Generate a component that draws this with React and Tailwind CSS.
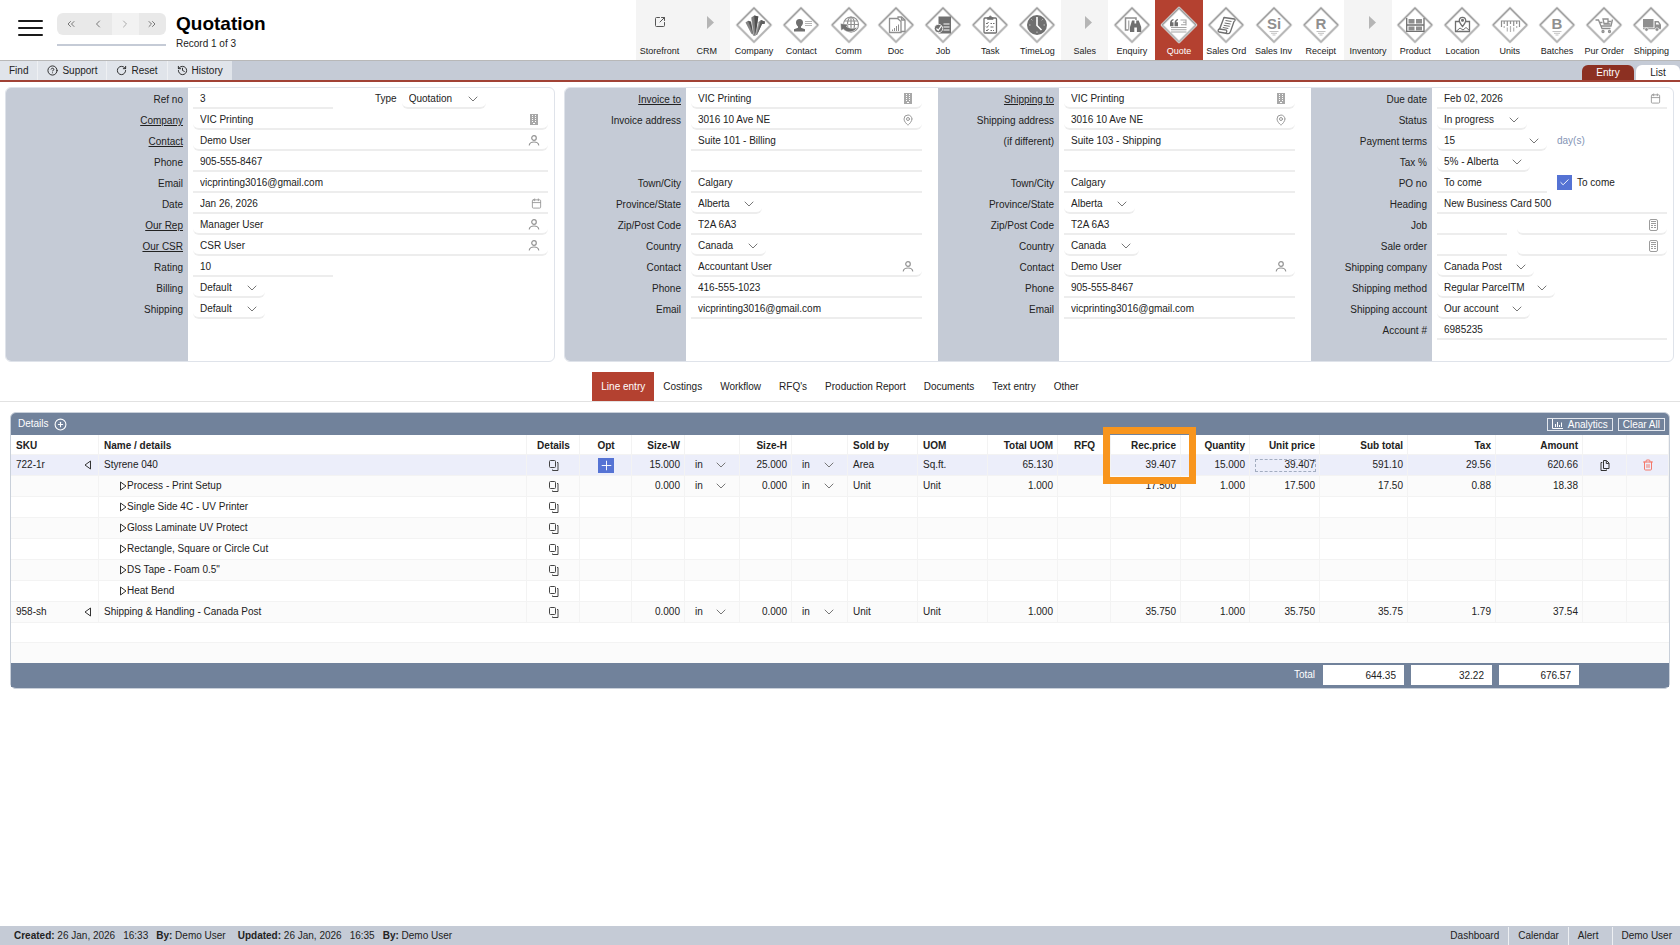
import React from 'react';
import {
    ChevronLeft, ChevronRight, ChevronsLeft, ChevronsRight, ChevronDown, CircleHelp, RotateCw, History,
    SquareArrowOutUpRight, CirclePlus, Plus, Check, Calendar, MapPin, Trash2,
} from 'lucide-react';

const DARK = '#6f6f6f';
const MID = '#8f8f8f';

// Glyphs drawn inside the 36x36 module diamonds
const GLYPHS = {
    company: (
        <g>
            <path d="M9.500 15.500l2.500-1.800 3 1 2.500 13.300-2.300-1.500z" fill="#858585" />
            <path d="M12 13.700l3 1 2.500 13.300z" fill="#555" />
            <path d="M22.500 15l2.500-2 4 1.500-.5 2.500h-2.500L21 28h-2z" fill="#858585" />
            <path d="M25 13l4 1.500-.5 2.500h-2.500L21 28z" fill="#5f5f5f" />
            <path d="M15.300 10.500l3-2 4 1-.8 5.500-2 13.700h-2.300z" fill="#7d7d7d" />
            <path d="M18.300 8.500l4 1-.8 5.500-2 13.700z" fill="#4f4f4f" />
            <path d="M15.600 14l2 13.500M22.500 16l-3 12" stroke="#fff" strokeWidth=".4" fill="none" />
        </g>
    ),
    contact: (
        <g fill={DARK}>
            <path d="M16.500 12c2.200 0 3.500 1.500 3.500 3.500 0 1.700-.9 3.300-2 4v1.300l4 1.400V24.500H11v-2.300l4-1.400v-1.300c-1.100-.7-2-2.300-2-4 0-2 1.300-3.500 3.500-3.500z" />
            <path d="M22 14.500h7M22 16.500h7M22 18.500h7" stroke="#b5b5b5" strokeWidth="1" />
        </g>
    ),
    comm: (
        <g fill="none" stroke={MID} strokeWidth="1.200">
            <circle cx="20" cy="17.500" r="7.500" />
            <ellipse cx="20" cy="17.500" rx="3.500" ry="7.500" />
            <path d="M12.500 17.500h15M13.500 14h13M20 10v15" />
            <path d="M9.500 16.500l7.500 1-1.500 2c2.500 2 7.500 2.500 11 .5-2.500 5.500-10.500 6.500-14 2.300l-2.500 1.200z" fill={DARK} stroke="#fff" strokeWidth=".5" />
        </g>
    ),
    doc: (
        <g fill="none" stroke={MID} strokeWidth="1.300">
            <path d="M20 11.500V10h3.500l3.500 3v11.500h-4" fill="#fff" />
            <path d="M23.500 10v3H27" />
            <path d="M11.500 11.500h8l3.500 3V25.500H11.500z" fill="#fff" />
            <path d="M14.500 24v-1.500M16.500 24v-3M18.500 24v-5M20.500 24v-6.500" strokeWidth="1" />
        </g>
    ),
    job: (
        <g>
            <path d="M13.500 9.500H26V26.500H13.500z" fill={DARK} />
            <path d="M18.500 17h6M18.500 20h6M18.500 23h6" stroke="#fff" strokeWidth="1.200" />
            <circle cx="13.500" cy="21.500" r="4.200" fill={DARK} stroke="#fff" strokeWidth=".8" />
            <path d="M11.500 21.500l1.700 1.800 3.200-4.500" stroke="#fff" strokeWidth="1.200" fill="none" />
        </g>
    ),
    task: (
        <g fill="none" stroke={DARK} strokeWidth="1.300">
            <rect x="12" y="11" width="12.500" height="15" rx="1" />
            <path d="M15.500 12.500v-2h1.500a1.300 1.600 0 012.600 0h1.500v2z" fill={DARK} strokeWidth=".6" />
            <path d="M14 16l1 1 1.500-2M14 19.500l1 1 1.500-2M14 23l1 1 1.500-2M18.500 16.500h1.500M21 16.500h1.500M18.500 20h3M18.500 23.500h1.500M21 23.500h1" strokeWidth="1" />
        </g>
    ),
    timelog: (
        <g>
            <circle cx="18" cy="18" r="10" fill={DARK} />
            <path d="M18 10v8.500l4.500 4.500" stroke="#fff" strokeWidth="1.600" fill="none" />
            <path d="M10 18h1.500M24.500 18H26M18 24.500V26M12.300 12.300l1 1M23.700 12.300l-1 1" stroke="#ddd" strokeWidth=".8" />
        </g>
    ),
    enquiry: (
        <g>
            <path d="M14 23h-2.500V11H22v2" fill="none" stroke={MID} strokeWidth="1.500" />
            <path d="M14.800 13.500v10" stroke={MID} strokeWidth="1" />
            <path d="M18 13.500h2.500v3h1.700v-3h2.500l2.500 6.500v5h-4.300v-4.500h-2.600V25H16v-5z" fill={DARK} />
        </g>
    ),
    quote: (
        <g>
            <path d="M9 16.500c0-2.600 1-4.100 3.500-4.500v1.200c-1 .3-1.600 1-1.600 2h1.600v4H9zM13.500 16.500c0-2.600 1-4.100 3.500-4.500v1.200c-1 .3-1.600 1-1.600 2H17v4h-3.500z" fill={DARK} />
            <path d="M19.500 13h6M22 15.300h3.500M20 17.700h5.500M10 20.500h15.500M10 22.700h15.500M10 25h15.500M25 12.500v6" stroke="#a5a5a5" strokeWidth="1.100" />
        </g>
    ),
    salesord: (
        <g fill="none" stroke={DARK} strokeWidth="1.300" strokeLinejoin="round">
            <path d="M16 10.500l10.500 1.500c1 .5.8 2-.5 2.500l-3.500 10c-.5 1.500-2 2.500-3.500 2l-8-1.500c-1.500-.8-1-2.800.5-3zM16 10.500l-4.300 11.500" />
            <path d="M11.500 22l7 1.200c.5 1 .3 2.500-.8 3" />
            <path d="M17.500 13.500l6 1M16.600 16l6 1M15.700 18.300l6 1M14.800 20.500l5.500 1" strokeWidth="1" />
        </g>
    ),
    product: (
        <g fill={MID}>
            <path d="M9.700 11v14M27 11v14M9.500 18h17.500M9.500 24.300h17.500" stroke={DARK} strokeWidth="1.300" />
            <rect x="11.500" y="12" width="6" height="4.500" />
            <rect x="19" y="12" width="6" height="4.500" />
            <rect x="11.500" y="19.500" width="6" height="4" />
            <rect x="19" y="19.500" width="6" height="4" />
        </g>
    ),
    location: (
        <g fill="none" stroke={DARK} strokeWidth="1.300">
            <path d="M15 14.500h-3.500v10h14v-10H22" />
            <path d="M18.500 19.500c-2-2.500-3.200-4-3.200-6a3.200 3.200 0 016.400 0c0 2-1.200 3.500-3.200 6z" />
            <circle cx="18.500" cy="13.300" r=".9" fill={DARK} />
            <path d="M12 24.500l4-3.500 3 2 3-2.500 3.500 3" strokeWidth="1" />
        </g>
    ),
    units: (
        <g fill="none" stroke={MID} strokeWidth="1.200">
            <path d="M9.500 20v-6h18v6" />
            <path d="M12.200 14v3M15.300 14v5M18.500 14v3M21.700 14v5M24.700 14v3" />
            <path d="M12.200 19v2M15.300 20.500v4M18.500 19v6M21.700 20.500v4M24.700 19v2" stroke="#b5b5b5" />
        </g>
    ),
    cart: (
        <g fill="none" stroke={MID} strokeWidth="1.300">
            <path d="M9.500 13h3l3.500 8.500h8.500M13.500 15.500h3M15 19h10l1.500-6.500" />
            <path d="M17 12h5v4.500h-4zM22 14.500h3.500M17.500 17h7" />
            <circle cx="17" cy="24.500" r="1" />
            <circle cx="23.500" cy="24.500" r="1" />
        </g>
    ),
    truck: (
        <g fill={MID}>
            <path d="M10 12h10.500v8.500H10z" />
            <path d="M21.500 14h4l2.500 3.500v4h-6.500z" />
            <path d="M23 15.500h2l1.300 2H23z" fill="#fff" />
            <path d="M10 21.700h18" stroke={MID} strokeWidth="1" />
            <circle cx="13.500" cy="22.500" r="1.800" stroke="#fff" strokeWidth=".6" />
            <circle cx="24" cy="22.500" r="1.800" stroke="#fff" strokeWidth=".6" />
        </g>
    ),
};

const MODULES = [
    { name: 'Storefront', kind: 'link' },
    { name: 'CRM', kind: 'group' },
    { name: 'Company', glyph: 'company' },
    { name: 'Contact', glyph: 'contact' },
    { name: 'Comm', glyph: 'comm' },
    { name: 'Doc', glyph: 'doc' },
    { name: 'Job', glyph: 'job' },
    { name: 'Task', glyph: 'task' },
    { name: 'TimeLog', glyph: 'timelog' },
    { name: 'Sales', kind: 'group' },
    { name: 'Enquiry', glyph: 'enquiry' },
    { name: 'Quote', glyph: 'quote', active: true },
    { name: 'Sales Ord', glyph: 'salesord' },
    { name: 'Sales Inv', letters: 'Si' },
    { name: 'Receipt', letters: 'R' },
    { name: 'Inventory', kind: 'group' },
    { name: 'Product', glyph: 'product' },
    { name: 'Location', glyph: 'location' },
    { name: 'Units', glyph: 'units' },
    { name: 'Batches', letters: 'B' },
    { name: 'Pur Order', glyph: 'cart' },
    { name: 'Shipping', glyph: 'truck' },
];

function Diamond({ glyph, letters }) {
    return (
        <svg width="38" height="38" viewBox="-1 -1 38 38" aria-hidden="true">
            <path d="M18 1L35 18 18 35 1 18z" fill="#fff" stroke="#dcdcdc" strokeWidth="2.600" strokeLinejoin="round" />
            <path d="M1 18L18 35 35 18" fill="none" stroke="#b4b4b4" strokeWidth="1.600" strokeLinejoin="round" />
            <path d="M1 18L18 1 35 18" fill="none" stroke="#9d9d9d" strokeWidth="1.300" strokeLinejoin="round" />
            {letters ? (
                <>
                    <text x="18" y="22" textAnchor="middle" fontSize="15" fontWeight="700" fill={MID}>{letters}</text>
                    <path d="M13.500 24.500h9M15 26.300h6M16.500 28h3" stroke="#c4c4c4" strokeWidth="1" />
                </>
            ) : GLYPHS[glyph]}
        </svg>
    );
}

function ModuleButton({ mod }) {
    return (
        <button className={`flex flex-col items-center h-full text-[9px] leading-[12px] whitespace-nowrap ${mod.active ? 'bg-[#b44130] text-white' : mod.kind ? 'bg-[#f4f4f4] text-[#222]' : 'text-[#222]'}`}>
            <span className="flex items-center justify-center h-[45px] pt-[5px]">
                {mod.kind === 'link' && <SquareArrowOutUpRight size={12} className="mb-1.5 text-[#555]" />}
                {mod.kind === 'group' && (
                    <svg width="7" height="13" viewBox="0 0 7 13" className="mb-1.5 ml-2" aria-hidden="true">
                        <path d="M0 0l7 6.500L0 13z" fill="#b5b5b5" />
                    </svg>
                )}
                {!mod.kind && <Diamond glyph={mod.glyph} letters={mod.letters} />}
            </span>
            <span>{mod.name}</span>
        </button>
    );
}

function BuildingIcon() {
    return (
        <svg width="8" height="11" viewBox="0 0 8 11" aria-hidden="true">
            <path d="M0 0h8v11H0z" fill="#a8a8a8" />
            <path d="M2 1.500h1M5 1.500h1M2 3.500h1M5 3.500h1M2 5.500h1M5 5.500h1M2 7.500h1M5 7.500h1M3 9.500h2" stroke="#fff" />
        </svg>
    );
}

function SheetIcon() {
    return (
        <svg width="9" height="12" viewBox="0 0 9 12" fill="none" stroke="#9c9c9c" aria-hidden="true">
            <rect x=".5" y=".5" width="8" height="11" rx="1.500" />
            <path d="M2 2.500h5M2 4.500h5M2 6.500h2M5 6.500h2M2 8.500h2M5 8.500h2" />
        </svg>
    );
}

function PersonIcon() {
    return (
        <svg width="12" height="11" viewBox="0 0 12 11" fill="none" stroke="#949494" strokeWidth="1.200" strokeLinecap="round" aria-hidden="true">
            <circle cx="6" cy="3" r="2.300" />
            <path d="M1.300 10c.3-2 2-3 4.700-3s4.400 1 4.700 3" />
        </svg>
    );
}

function DetailsIcon() {
    return (
        <svg width="11" height="11" viewBox="0 0 11 11" fill="none" stroke="#444" strokeLinejoin="round" aria-hidden="true">
            <rect x="1.500" y=".5" width="6" height="7" rx="1" />
            <path d="M9 2.500h1v8H4.500V9.500" />
        </svg>
    );
}

function DuplicateIcon() {
    return (
        <svg width="10" height="11" viewBox="0 0 10 11" fill="none" stroke="#333" strokeLinejoin="round" aria-hidden="true">
            <path d="M3.500.5h3L9 3v5.500H3.500z" />
            <path d="M6.300 1v2.500h2.500M2.300 2.500H1v8h5.500V9.500" />
        </svg>
    );
}

const FIELD_ICONS = {
    building: <BuildingIcon />,
    sheet: <SheetIcon />,
    person: <PersonIcon />,
    calendar: <Calendar size={11} />,
    pin: <MapPin size={12} />,
};

function TextField({ id, value = '', icon, width = 'w-full', label }) {
    const isDate = icon === 'calendar';
    return (
        <span className={`relative block ${width}`}>
            <input id={id} aria-label={label} defaultValue={value} className={`block w-full h-[21px] pt-0.5 pl-[7px] pr-6 border-b-2 border-[#ededed] bg-transparent outline-none ${icon && !isDate ? 'rounded-b-md' : ''}`} />
            {icon && <span className={`absolute inset-y-0 flex items-center justify-center w-3 pointer-events-none text-[#999] ${isDate ? 'right-1.5' : 'right-2'}`}>{FIELD_ICONS[icon]}</span>}
        </span>
    );
}

function SelectField({ id, value, width }) {
    return (
        <span className={`relative block ${width}`}>
            <select id={id} defaultValue={value} className="block w-full h-[21px] pt-0.5 pl-[7px] appearance-none rounded-b-md border-b-2 border-[#ededed] bg-transparent outline-none">
                <option>{value}</option>
            </select>
            <ChevronDown size={16} strokeWidth={1.500} className="absolute top-[3px] right-[5px] pointer-events-none text-[#777]" />
        </span>
    );
}

const CUSTOMER = [
    { label: 'Ref no', value: '3', width: 'w-[140px]', type: true },
    { label: 'Company', value: 'VIC Printing', icon: 'building', link: true },
    { label: 'Contact', value: 'Demo User', icon: 'person', link: true },
    { label: 'Phone', value: '905-555-8467' },
    { label: 'Email', value: 'vicprinting3016@gmail.com' },
    { label: 'Date', value: 'Jan 26, 2026', icon: 'calendar' },
    { label: 'Our Rep', value: 'Manager User', icon: 'person', link: true },
    { label: 'Our CSR', value: 'CSR User', icon: 'person', link: true },
    { label: 'Rating', value: '10', width: 'w-[140px]' },
    { label: 'Billing', value: 'Default', select: 'w-[72px]' },
    { label: 'Shipping', value: 'Default', select: 'w-[72px]' },
];

const INVOICE = [
    { label: 'Invoice to', value: 'VIC Printing', icon: 'building', link: true },
    { label: 'Invoice address', value: '3016 10 Ave NE', icon: 'pin' },
    { label: '', value: 'Suite 101 - Billing' },
    { label: '', value: '' },
    { label: 'Town/City', value: 'Calgary' },
    { label: 'Province/State', value: 'Alberta', select: 'w-[71px]' },
    { label: 'Zip/Post Code', value: 'T2A 6A3' },
    { label: 'Country', value: 'Canada', select: 'w-[75px]' },
    { label: 'Contact', value: 'Accountant User', icon: 'person' },
    { label: 'Phone', value: '416-555-1023' },
    { label: 'Email', value: 'vicprinting3016@gmail.com' },
];

const DELIVERY = [
    { label: 'Shipping to', value: 'VIC Printing', icon: 'building', link: true },
    { label: 'Shipping address', value: '3016 10 Ave NE', icon: 'pin' },
    { label: '(if different)', value: 'Suite 103 - Shipping' },
    { label: '', value: '' },
    { label: 'Town/City', value: 'Calgary' },
    { label: 'Province/State', value: 'Alberta', select: 'w-[71px]' },
    { label: 'Zip/Post Code', value: 'T2A 6A3' },
    { label: 'Country', value: 'Canada', select: 'w-[75px]' },
    { label: 'Contact', value: 'Demo User', icon: 'person' },
    { label: 'Phone', value: '905-555-8467' },
    { label: 'Email', value: 'vicprinting3016@gmail.com' },
];

const TERMS = [
    { label: 'Due date', value: 'Feb 02, 2026', icon: 'calendar' },
    { label: 'Status', value: 'In progress', select: 'w-[90px]' },
    { label: 'Payment terms', value: '15', select: 'w-[110px]', suffix: 'day(s)' },
    { label: 'Tax %', value: '5% - Alberta', select: 'w-[93px]' },
    { label: 'PO no', value: 'To come', width: 'w-[110px]', check: 'To come' },
    { label: 'Heading', value: 'New Business Card 500' },
    { label: 'Job', pair: true },
    { label: 'Sale order', pair: true },
    { label: 'Shipping company', value: 'Canada Post', select: 'w-[97px]' },
    { label: 'Shipping method', value: 'Regular ParcelTM', select: 'w-[118px]' },
    { label: 'Shipping account', value: 'Our account', select: 'w-[93px]' },
    { label: 'Account #', value: '6985235' },
];

function Field({ row, id }) {
    if (row.pair) {
        return (
            <div className="flex gap-2.5">
                <TextField id={id} width="w-[70px]" />
                <TextField width="flex-1" icon="sheet" label={`${row.label} name`} />
            </div>
        );
    }
    return (
        <div className="flex items-center h-[21px]">
            {row.select
                ? <SelectField id={id} value={row.value} width={row.select} />
                : <TextField id={id} value={row.value} icon={row.icon} width={row.width} label={row.label ? undefined : 'Address line'} />}
            {row.type && (
                <>
                    <label htmlFor="quote-type" className="ml-[42px] mr-[5px]">Type</label>
                    <SelectField id="quote-type" value="Quotation" width="w-[84px]" />
                </>
            )}
            {row.suffix && <span className="ml-2.5 text-[#8494b5]">{row.suffix}</span>}
            {row.check && (
                <label className="relative flex items-center ml-2.5 gap-[5px]">
                    <input type="checkbox" defaultChecked className="w-[15px] h-[15px] appearance-none bg-[#5573d4]" />
                    <Check size={11} className="absolute left-0.5 text-white pointer-events-none" />
                    {row.check}
                </label>
            )}
        </div>
    );
}

function Section({ name, rows, columns, pad }) {
    return (
        <div className={`grid ${columns}`}>
            <div className="bg-[#c5cbd6] pr-[5px] text-right">
                {rows.map((row, i) => (
                    <div key={i} className="h-[21px] leading-[23px]">
                        {row.label && <label htmlFor={`${name}-${i}`} className={row.link ? 'underline' : ''}>{row.label}</label>}
                    </div>
                ))}
            </div>
            <div className={pad}>
                {rows.map((row, i) => <Field key={i} row={row} id={`${name}-${i}`} />)}
            </div>
        </div>
    );
}

const TABS = ['Line entry', 'Costings', 'Workflow', "RFQ's", 'Production Report', 'Documents', 'Text entry', 'Other'];

const COLUMNS = [
    { title: 'SKU', w: 'w-[88px]' },
    { title: 'Name / details', w: '' },
    { title: 'Details', w: 'w-[53px]', align: 'text-center' },
    { title: 'Opt', w: 'w-[52px]', align: 'text-center' },
    { title: 'Size-W', w: 'w-[53px]', align: 'text-right' },
    { title: '', w: 'w-[55px]' },
    { title: 'Size-H', w: 'w-[52px]', align: 'text-right' },
    { title: '', w: 'w-[56px]' },
    { title: 'Sold by', w: 'w-[70px]' },
    { title: 'UOM', w: 'w-[70px]' },
    { title: 'Total UOM', w: 'w-[70px]', align: 'text-right' },
    { title: 'RFQ', w: 'w-[53px]', align: 'text-center' },
    { title: 'Rec.price', w: 'w-[70px]', align: 'text-right', marked: true },
    { title: 'Quantity', w: 'w-[69px]', align: 'text-right' },
    { title: 'Unit price', w: 'w-[70px]', align: 'text-right' },
    { title: 'Sub total', w: 'w-[88px]', align: 'text-right' },
    { title: 'Tax', w: 'w-[88px]', align: 'text-right' },
    { title: 'Amount', w: 'w-[87px]', align: 'text-right' },
    { title: '', w: 'w-[44px]' },
    { title: '', w: 'w-[42px]' },
];

const LINES = [
    { sku: '722-1r', name: 'Styrene 040', selected: true, w: '15.000', h: '25.000', sold: 'Area', uom: 'Sq.ft.', total: '65.130', rec: '39.407', qty: '15.000', unit: '39.407', sub: '591.10', tax: '29.56', amount: '620.66' },
    { name: 'Process - Print Setup', w: '0.000', h: '0.000', sold: 'Unit', uom: 'Unit', total: '1.000', rec: '17.500', qty: '1.000', unit: '17.500', sub: '17.50', tax: '0.88', amount: '18.38' },
    { name: 'Single Side 4C - UV Printer' },
    { name: 'Gloss Laminate UV Protect' },
    { name: 'Rectangle, Square or Circle Cut' },
    { name: 'DS Tape - Foam 0.5"' },
    { name: 'Heat Bend' },
    { sku: '958-sh', name: 'Shipping & Handling - Canada Post', w: '0.000', h: '0.000', sold: 'Unit', uom: 'Unit', total: '1.000', rec: '35.750', qty: '1.000', unit: '35.750', sub: '35.75', tax: '1.79', amount: '37.54' },
];

const CELL = 'pl-[5px] pr-1 border-r border-b border-[#f3f3f3]';

function Num({ children }) {
    return <td className={`${CELL} text-right`}>{children}</td>;
}

function UnitCell({ show, label }) {
    return (
        <td className={CELL}>
            {show && (
                <span className="relative block">
                    <select aria-label={label} className="block w-full h-4 pl-[5px] appearance-none bg-transparent outline-none">
                        <option>in</option>
                    </select>
                    <ChevronDown size={16} strokeWidth={1.500} className="absolute top-0 right-1.5 text-[#777] pointer-events-none" />
                </span>
            )}
        </td>
    );
}

function Triangle({ left }) {
    return (
        <svg width="8" height="10" viewBox="0 0 8 10" fill="none" stroke="#333" aria-hidden="true">
            <path d={left ? 'M6.500 1v8L1 5z' : 'M1.500 1v8L7 5z'} strokeLinejoin="round" />
        </svg>
    );
}

function LineRow({ line, striped }) {
    return (
        <tr className={`h-[21px] ${line.selected ? 'bg-[#eceefa]' : striped ? 'bg-[#fbfbfb]' : 'bg-white'}`}>
            <td className={CELL}>
                {line.sku && (
                    <span className="flex items-center justify-between pr-0.5">
                        {line.sku}
                        <button aria-label="Collapse"><Triangle left /></button>
                    </span>
                )}
            </td>
            <td className={CELL}>
                {line.sku ? line.name : (
                    <span className="flex items-center pl-[15px]">
                        <button aria-label="Expand"><Triangle /></button>
                        {line.name}
                    </span>
                )}
            </td>
            <td className={CELL}>
                <button aria-label="Open details" className="flex mx-auto"><DetailsIcon /></button>
            </td>
            <td className={CELL}>
                {line.selected && (
                    <button aria-label="Add option" className="flex items-center justify-center w-4 h-[15px] mx-auto bg-[#5573d4] text-white"><Plus size={15} strokeWidth={1.500} /></button>
                )}
            </td>
            <Num>{line.w}</Num>
            <UnitCell show={line.w} label="Width unit" />
            <Num>{line.h}</Num>
            <UnitCell show={line.h} label="Height unit" />
            <td className={CELL}>{line.sold}</td>
            <td className={CELL}>{line.uom}</td>
            <Num>{line.total}</Num>
            <td className={CELL} />
            <Num>{line.rec}</Num>
            <Num>{line.qty}</Num>
            {line.selected ? (
                <td className="pl-[5px] pr-[3px] border-r border-b border-[#f3f3f3]">
                    <input aria-label="Unit price" defaultValue={line.unit} className="block w-full h-[13px] border border-dashed border-[#a3adc0] bg-transparent text-right outline-none" />
                </td>
            ) : <Num>{line.unit}</Num>}
            <Num>{line.sub}</Num>
            <Num>{line.tax}</Num>
            <Num>{line.amount}</Num>
            <td className={CELL}>
                {line.selected && <button aria-label="Duplicate" className="flex mx-auto"><DuplicateIcon /></button>}
            </td>
            <td className={CELL}>
                {line.selected && <button aria-label="Delete" className="flex mx-auto text-[#f4796b]"><Trash2 size={12} /></button>}
            </td>
        </tr>
    );
}

function LineTable() {
    return (
        <div className="mt-2.5 mx-2.5 rounded-md border border-[#c9d0da] bg-[#71829b]">
            <div className="flex items-center h-[22px] pl-[7px] pr-1 text-white">
                <span>Details</span>
                <button aria-label="Add line" className="ml-[5px]"><CirclePlus size={13} /></button>
                <button className="flex items-center gap-[5px] ml-auto h-[13px] px-1 border border-[#e3e7ee] leading-[11px]">
                    <svg width="11" height="10" viewBox="0 0 11 10" fill="none" stroke="#fff" aria-hidden="true">
                        <path d="M.5 0v9.500H11M3.500 8V5M5.500 8V3M7.500 8V6M9.500 8V3.500" />
                    </svg>
                    Analytics
                </button>
                <button className="ml-[5px] h-[13px] px-1 border border-[#e3e7ee] leading-[11px]">Clear All</button>
            </div>
            <table className="w-full table-fixed border-separate border-spacing-0 bg-white">
                <colgroup>
                    {COLUMNS.map((col, i) => <col key={i} className={col.w} />)}
                </colgroup>
                <thead>
                    <tr className="h-[20px]">
                        {COLUMNS.map((col, i) => (
                            <th key={i} className={`${CELL} relative pt-0.5 whitespace-nowrap ${col.align || 'text-left'}`}>
                                {col.title}
                                {col.marked && <span className="absolute -top-2 -left-2 z-10 w-[93px] h-[57px] border-[7px] border-[#f8951d] pointer-events-none" />}
                            </th>
                        ))}
                    </tr>
                </thead>
                <tbody>
                    {LINES.map((line, i) => <LineRow key={i} line={line} striped={i % 2 === 1} />)}
                    <tr className="h-5"><td colSpan={20} className="border-b border-[#f3f3f3]" /></tr>
                    <tr className="h-5 bg-[#fbfbfb]"><td colSpan={20} /></tr>
                </tbody>
                <tfoot>
                    <tr className="h-6 bg-[#71829b]">
                        <td colSpan={15} className="pr-[5px] text-right text-white">Total</td>
                        {['644.35', '32.22', '676.57'].map((sum) => (
                            <td key={sum} className="pl-[3px] pr-1">
                                <input readOnly aria-label="Total" value={sum} className="block w-full h-5 pr-2 bg-white text-right outline-none" />
                            </td>
                        ))}
                        <td colSpan={2} />
                    </tr>
                </tfoot>
            </table>
            <div className="h-px" />
        </div>
    );
}

function Header() {
    return (
        <header className="flex h-[61px] border-b border-[#b8b8b8]">
            <button aria-label="Menu" className="flex flex-col gap-[5px] mt-[20px] ml-[18px] w-[25px] h-5">
                <span className="w-full h-0.5 rounded bg-[#1a1a1a]" />
                <span className="w-full h-0.5 rounded bg-[#1a1a1a]" />
                <span className="w-full h-0.5 rounded bg-[#1a1a1a]" />
            </button>
            <div className="mt-[13px] ml-[14px] w-[109px]">
                <div className="grid grid-cols-4 h-[22px] rounded-md overflow-hidden bg-[#e9e9e9] text-[#777]">
                    <button aria-label="First" className="flex items-center justify-center"><ChevronsLeft size={12} /></button>
                    <button aria-label="Previous" className="flex items-center justify-center"><ChevronLeft size={12} /></button>
                    <button aria-label="Next" className="flex items-center justify-center bg-[#f2f2f2] text-[#aaa]"><ChevronRight size={12} /></button>
                    <button aria-label="Last" className="flex items-center justify-center"><ChevronsRight size={12} /></button>
                </div>
                <div className="mt-[9px] h-0.5 bg-[#c5cbd6]" />
            </div>
            <div className="mt-3 ml-2.5">
                <h1 className="text-[19px] leading-6 font-bold text-black">Quotation</h1>
                <p className="leading-4">Record 1 of 3</p>
            </div>
            <nav className="grid grid-cols-[repeat(22,minmax(0,1fr))] w-[1039px] ml-auto mr-[5px]">
                {MODULES.map((mod) => <ModuleButton key={mod.name} mod={mod} />)}
            </nav>
        </header>
    );
}

function Toolbar() {
    return (
        <div className="flex h-[21px] border-b-2 border-[#a14235] bg-[#c5cbd6]">
            <button className="px-[9px] border-r border-[#eef0f3] bg-[#e0e4ea]">Find</button>
            <button className="flex items-center gap-1 px-[9px] border-r border-[#eef0f3] bg-[#e0e4ea]"><CircleHelp size={11} />Support</button>
            <button className="flex items-center gap-1 px-[9px] border-r border-[#eef0f3] bg-[#e0e4ea]"><RotateCw size={11} />Reset</button>
            <button className="flex items-center gap-1 px-[9px] bg-[#e0e4ea]"><History size={11} />History</button>
            <div className="flex items-end gap-0.5 ml-auto">
                <button className="w-[52px] h-[15px] rounded-t-md bg-[#8c3022] text-white">Entry</button>
                <button className="w-[44px] h-[15px] rounded-t-md bg-white">List</button>
            </div>
        </div>
    );
}

function StatusBar() {
    return (
        <footer className="flex items-center mt-auto h-[19px] pl-3.5 pt-px bg-[#c5cbd6]">
            <span><b>Created:</b> 26 Jan, 2026</span>
            <span className="ml-2">16:33</span>
            <span className="ml-2"><b>By:</b> Demo User</span>
            <span className="ml-3"><b>Updated:</b> 26 Jan, 2026</span>
            <span className="ml-2">16:35</span>
            <span className="ml-2"><b>By:</b> Demo User</span>
            <div className="flex h-full ml-auto">
                <button className="px-[9px] border-r border-[#eef0f3]">Dashboard</button>
                <button className="px-[9px] border-r border-[#eef0f3]">Calendar</button>
                <button className="pl-[9px] pr-3.5 border-r border-[#eef0f3]">Alert</button>
                <button className="px-2">Demo User</button>
            </div>
        </footer>
    );
}

export default function App() {
    return (
        <div className="flex flex-col min-h-screen bg-white font-['Liberation_Sans',Arial,sans-serif] text-[10px] leading-[14px] text-[#222]">
            <Header />
            <Toolbar />
            <form className="grid grid-cols-[550fr_1110fr] gap-[9px] mt-[5px] pl-[5px] pr-1.5">
                <div className="grid h-[275px] overflow-hidden rounded-md border border-[#dfe3ea]">
                    <Section name="customer" rows={CUSTOMER} columns="grid-cols-[182px_1fr]" pad="pl-[5px] pr-1.5" />
                </div>
                <div className="grid grid-cols-[373fr_373fr_362fr] h-[275px] overflow-hidden rounded-md border border-[#dfe3ea]">
                    <Section name="invoice" rows={INVOICE} columns="grid-cols-[121px_1fr]" pad="pl-[5px] pr-4" />
                    <Section name="delivery" rows={DELIVERY} columns="grid-cols-[121px_1fr]" pad="pl-[5px] pr-4" />
                    <Section name="terms" rows={TERMS} columns="grid-cols-[121px_1fr]" pad="pl-[5px] pr-1.5" />
                </div>
            </form>
            <nav className="flex justify-center mt-2.5 h-[30px] border-b border-[#e2e2e2]">
                {TABS.map((tab, i) => (
                    <button key={tab} className={`px-[9px] ${i === 0 ? 'bg-[#b44130] text-white' : ''}`}>{tab}</button>
                ))}
            </nav>
            <LineTable />
            <StatusBar />
        </div>
    );
}
